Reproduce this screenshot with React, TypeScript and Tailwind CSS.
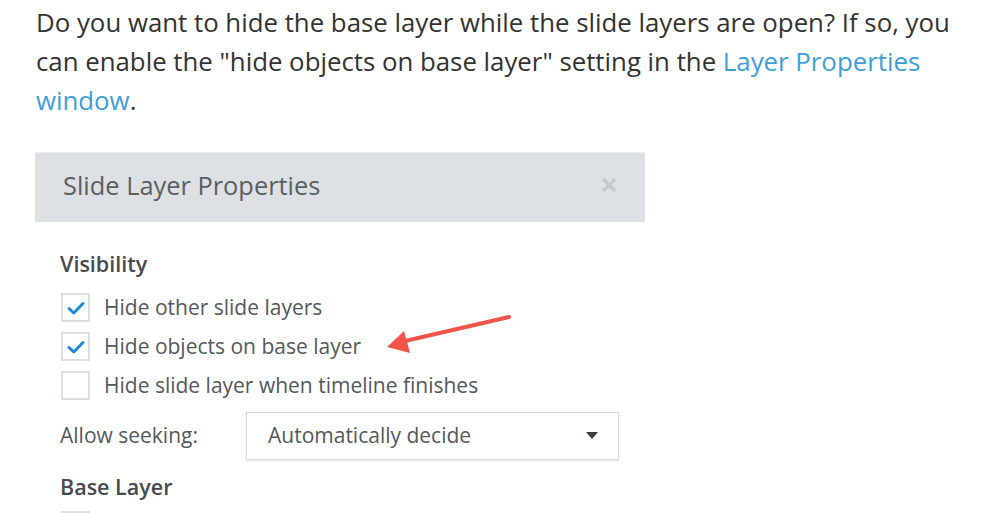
export default function App() {
  const rows = [
    { label: "Hide other slide layers", checked: true },
    { label: "Hide objects on base layer", checked: true },
    { label: "Hide slide layer when timeline finishes", checked: false },
  ]

  return (
    <div className="relative h-[513px] w-[999px] overflow-hidden bg-white">
      {/* intro paragraph */}
      <p className="pl-[36px] pr-[30px] pt-[3px] font-['Open_Sans',sans-serif] text-[25.8px] leading-[39px] text-[#333333]">
        Do you want to hide the base layer while the slide layers are open? If so, you can enable the "hide objects on base layer" setting in the{" "}
        <span className="text-[#3d9fd8]">Layer Properties window</span>.
      </p>

      {/* dialog screenshot */}
      <div className="ml-[35px] mt-[32px] w-[610px] font-['Open_Sans',sans-serif]">
        <div className="flex h-[70px] items-center justify-between border-t border-[#eceef0] bg-[#dde1e5] pb-[5px] pl-[28px] pr-[28px]">
          <span className="text-[25.4px] text-[#5b5e62]">Slide Layer Properties</span>
          <svg width="16" height="16" viewBox="0 0 16 16">
            <path d="M2 2 L14 14 M14 2 L2 14" stroke="#c6c9cc" strokeWidth="3.2" />
          </svg>
        </div>

        <div className="pl-[25px] pt-[28px]">
          <div className="text-[21.5px] font-semibold leading-[28px] text-[#474a4e]">Visibility</div>

          <div className="mt-[10px]">
            {rows.map((r) => (
              <div key={r.label} className="flex h-[39px] items-center">
                <div className="ml-px flex h-[29px] w-[29px] items-center justify-center border-2 border-[#dcdfe2] bg-white">
                  {r.checked && (
                    <svg width="18" height="14" viewBox="0 0 18 14">
                      <path d="M2 7.5 L6.8 12 L16 2.5" fill="none" stroke="#1f8ad6" strokeWidth="3" strokeLinecap="round" strokeLinejoin="round" />
                    </svg>
                  )}
                </div>
                <span className="ml-[14px] text-[21px] text-[#55585c]">{r.label}</span>
              </div>
            ))}
          </div>

          <div className="mt-[7px] flex items-center">
            <span className="w-[186px] text-[21px] text-[#55585c]">Allow seeking:</span>
            <div className="flex h-[48px] w-[373px] items-center justify-between border border-[#d7dadd] bg-white pl-[21px] pr-[20px] shadow-[0_1px_2px_rgba(0,0,0,0.12)]">
              <span className="text-[21px] text-[#55585c]">Automatically decide</span>
              <svg width="12" height="8" viewBox="0 0 12 8">
                <path d="M0 0 H12 L6 7 Z" fill="#3a3d40" />
              </svg>
            </div>
          </div>

          <div className="mt-[13px] text-[21.5px] font-semibold leading-[28px] text-[#474a4e]">Base Layer</div>
          <div className="ml-px mt-[10px] h-[29px] w-[29px] border-2 border-[#dcdfe2]" />
        </div>
      </div>

      {/* annotation arrow */}
      <svg className="absolute left-[380px] top-[305px]" width="140" height="55" viewBox="0 0 140 55">
        <line x1="129" y1="12" x2="25" y2="36" stroke="#f0544a" strokeWidth="4" strokeLinecap="round" />
        <path d="M7 42 L24 26 L30 48 Z" fill="#f0544a" />
      </svg>
    </div>
  )
}
